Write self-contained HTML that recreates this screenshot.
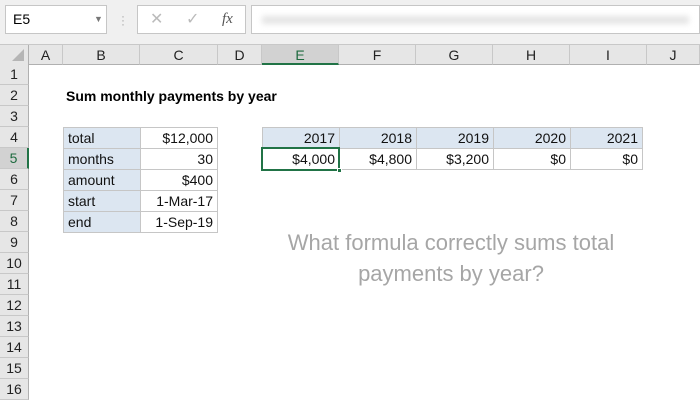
<!DOCTYPE html><html><head><style>
body{margin:0;width:700px;height:400px;overflow:hidden;background:#fff;font-family:"Liberation Sans",sans-serif;position:relative}
.a{position:absolute;box-sizing:border-box}
.top{left:0;top:0;width:700px;height:45px;background:#f0f0f0;border-bottom:1px solid #c8c8c8}
.box{background:#fff;border:1px solid #c6c6c6}
.ch{top:45px;height:20px;background:#e6e6e6;border-right:1px solid #c8c8c8;border-bottom:1px solid #b0b0b0;font-size:14px;text-align:center;line-height:20px;color:#222}
.rh{left:0;width:29px;height:21px;background:#e6e6e6;border-bottom:1px solid #c8c8c8;border-right:1px solid #b0b0b0;font-size:14px;text-align:center;line-height:21px;color:#222}
.c{height:22px;border:1px solid #c6c6c6;font-size:14px;line-height:20px;padding:0 4px;color:#111}
.l{background:#dce6f1}
.r{text-align:right}
</style></head><body>
<div class="a top"></div>
<div class="a box" style="left:5px;top:5px;width:102px;height:29px;font-size:14px;line-height:27px;padding-left:7px">E5<span style="position:absolute;left:88px;top:0;font-size:9px;color:#777">▼</span></div>
<div class="a" style="left:121px;top:14px;color:#aaa;font-size:12px;line-height:4px">·<br>·<br>·</div>
<div class="a box" style="left:137px;top:5px;width:109px;height:29px;color:#bbb;font-size:16px;line-height:27px"><span style="position:absolute;left:12px">✕</span><span style="position:absolute;left:48px">✓</span><span style="position:absolute;left:84px;color:#555;font-style:italic;font-family:'Liberation Serif',serif;font-size:15px">fx</span></div>
<div class="a box" style="left:251px;top:5px;width:449px;height:29px;"><div style="margin:10px 10px;height:8px;background:#e4e4e4;filter:blur(3px)"></div></div>
<div class="a" style="left:0;top:45px;width:29px;height:20px;background:#e6e6e6;border-right:1px solid #b0b0b0;border-bottom:1px solid #b0b0b0;box-sizing:border-box"><div style="position:absolute;right:4px;bottom:3px;width:0;height:0;border-left:12px solid transparent;border-bottom:12px solid #b5b5b5"></div></div>
<div class="a ch" style="left:29px;width:34px">A</div>
<div class="a ch" style="left:63px;width:77px">B</div>
<div class="a ch" style="left:140px;width:78px">C</div>
<div class="a ch" style="left:218px;width:44px">D</div>
<div class="a ch" style="left:262px;width:77px;background:#d2d2d2;border-bottom:2px solid #217346;color:#1e6b3f">E</div>
<div class="a ch" style="left:339px;width:77px">F</div>
<div class="a ch" style="left:416px;width:77px">G</div>
<div class="a ch" style="left:493px;width:77px">H</div>
<div class="a ch" style="left:570px;width:77px">I</div>
<div class="a ch" style="left:647px;width:53px">J</div>
<div class="a rh" style="top:64px">1</div><div class="a rh" style="top:85px">2</div><div class="a rh" style="top:106px">3</div><div class="a rh" style="top:127px">4</div>
<div class="a rh" style="top:148px;background:#d2d2d2;border-right:2px solid #217346;color:#1e6b3f">5</div>
<div class="a rh" style="top:169px">6</div><div class="a rh" style="top:190px">7</div><div class="a rh" style="top:211px">8</div><div class="a rh" style="top:232px">9</div><div class="a rh" style="top:253px">10</div><div class="a rh" style="top:274px">11</div><div class="a rh" style="top:295px">12</div><div class="a rh" style="top:316px">13</div><div class="a rh" style="top:337px">14</div><div class="a rh" style="top:358px">15</div><div class="a rh" style="top:379px">16</div>
<div class="a" style="left:66px;top:85px;font-size:14px;font-weight:bold;line-height:23px">Sum monthly payments by year</div>
<div class="a c l" style="left:63px;top:127px;width:78px">total</div><div class="a c r" style="left:140px;top:127px;width:78px">$12,000</div>
<div class="a c l" style="left:63px;top:148px;width:78px">months</div><div class="a c r" style="left:140px;top:148px;width:78px">30</div>
<div class="a c l" style="left:63px;top:169px;width:78px">amount</div><div class="a c r" style="left:140px;top:169px;width:78px">$400</div>
<div class="a c l" style="left:63px;top:190px;width:78px">start</div><div class="a c r" style="left:140px;top:190px;width:78px">1-Mar-17</div>
<div class="a c l" style="left:63px;top:211px;width:78px">end</div><div class="a c r" style="left:140px;top:211px;width:78px">1-Sep-19</div>
<div class="a c l r" style="left:262px;top:127px;width:78px">2017</div><div class="a c l r" style="left:339px;top:127px;width:78px">2018</div><div class="a c l r" style="left:416px;top:127px;width:78px">2019</div><div class="a c l r" style="left:493px;top:127px;width:78px">2020</div><div class="a c l r" style="left:570px;top:127px;width:73px">2021</div>
<div class="a c r" style="left:262px;top:148px;width:78px">$4,000</div><div class="a c r" style="left:339px;top:148px;width:78px">$4,800</div><div class="a c r" style="left:416px;top:148px;width:78px">$3,200</div><div class="a c r" style="left:493px;top:148px;width:78px">$0</div><div class="a c r" style="left:570px;top:148px;width:73px">$0</div>
<div class="a" style="left:261px;top:147px;width:79px;height:24px;border:2px solid #217346"></div>
<div class="a" style="left:337px;top:168px;width:5px;height:5px;background:#217346;border:1px solid #fff"></div>
<div class="a" style="left:245px;top:227px;width:412px;text-align:center;color:#a6a6a6;font-size:22px;line-height:31px">What formula correctly sums total<br>payments by year?</div>
</body></html>
